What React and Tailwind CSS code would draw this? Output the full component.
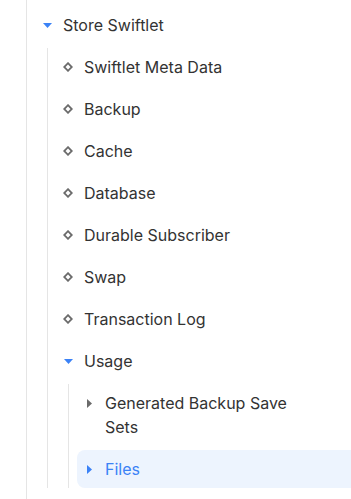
import React from "react";

const tree = {
  label: "Store Swiftlet",
  open: true,
  children: [
    { label: "Swiftlet Meta Data" },
    { label: "Backup" },
    { label: "Cache" },
    { label: "Database" },
    { label: "Durable Subscriber" },
    { label: "Swap" },
    { label: "Transaction Log" },
    {
      label: "Usage",
      open: true,
      children: [
        { label: "Generated Backup Save Sets", closed: true },
        { label: "Files", closed: true, active: true },
      ],
    },
  ],
};

function CaretDown({ color }) {
  return (
    <svg width="9" height="5" viewBox="0 0 9 5">
      <path d="M0 0 L9 0 L4.5 5 Z" fill={color} />
    </svg>
  );
}

function CaretRight({ color }) {
  return (
    <svg width="5" height="9" viewBox="0 0 5 9">
      <path d="M0 0 L5 4.5 L0 9 Z" fill={color} />
    </svg>
  );
}

function Diamond() {
  return (
    <svg width="10" height="10" viewBox="0 0 10 10">
      <path d="M5 1.2 L8.8 5 L5 8.8 L1.2 5 Z" fill="none" stroke="#6b6b6b" strokeWidth="1.8" />
    </svg>
  );
}

function Node({ node }) {
  let icon = <Diamond />;
  if (node.open) icon = <CaretDown color="#3b82f6" />;
  if (node.closed) icon = <CaretRight color={node.active ? "#3b82f6" : "#6b6b6b"} />;

  return (
    <div className="flex flex-col gap-1">
      <div
        className={`${
          node.active ? "bg-[#edf4fe] text-[#3b82f6]" : "text-[#333333]"
        } flex items-start rounded-lg py-[7px] pl-[6px] pr-[45px]`}
      >
        <span className="w-3 h-6 flex items-center justify-center shrink-0">{icon}</span>
        <span className="ml-[10px] text-[16px] leading-6">{node.label}</span>
      </div>
      {node.children && (
        <div className="ml-3 border-l border-[#e5e5e5] pl-2 flex flex-col gap-1">
          {node.children.map((c, i) => (
            <Node key={i} node={c} />
          ))}
        </div>
      )}
    </div>
  );
}

export default function App() {
  return (
    <div
      className="h-screen overflow-hidden bg-white"
      style={{ fontFamily: "Inter, 'Noto Sans', sans-serif" }}
    >
      <div className="w-[335px] ml-[26px] min-h-screen border-l border-[#e5e5e5] pl-2 pt-[6px]">
        <Node node={tree} />
      </div>
    </div>
  );
}
